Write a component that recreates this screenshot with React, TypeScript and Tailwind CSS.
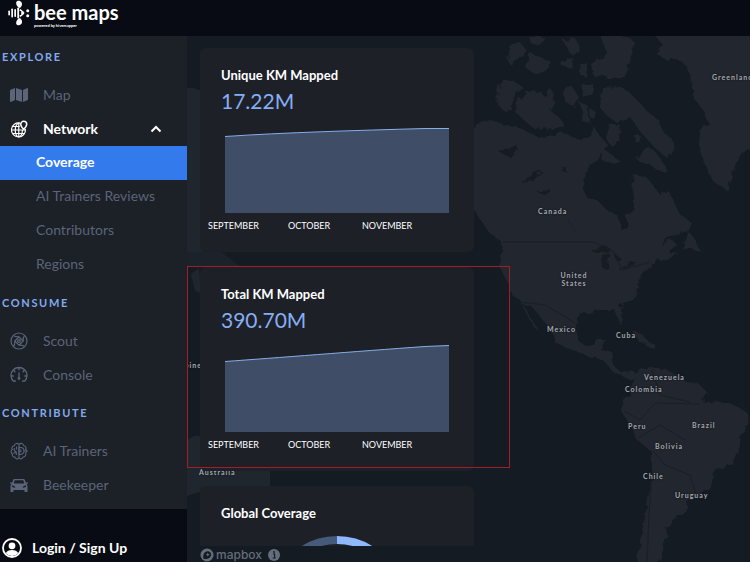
import type { ReactNode } from "react";
import { FaMap } from "react-icons/fa";

const iconClass = "h-[18px] w-[18px] shrink-0";

function GlobePinIcon() {
  return (
    <svg viewBox="0 0 18 18" className={iconClass} fill="none" stroke="currentColor" strokeWidth="1.2" aria-hidden="true">
      <path d="M10 3.1A7 7 0 1 0 15.4 9" />
      <path d="M9.6 3C7 3 5.200 6 5.200 10s1.800 7 3.600 7 3.600-3 3.600-6.500M8.800 3v14M1.800 10h13.600M2.800 6.500h7M2.800 13.500h12" />
      <path d="M13.700 9.500c-1.800-2-3-3.600-3-5.200a3 3 0 0 1 6 0c0 1.600-1.200 3.200-3 5.200z" strokeWidth="1.500" />
    </svg>
  );
}

function ScoutIcon() {
  return (
    <svg viewBox="0 0 18 18" className={iconClass} fill="none" stroke="currentColor" strokeWidth="1.2" aria-hidden="true">
      <circle cx="9" cy="9" r="8" />
      <path d="M9 4.800 13.200 9 9 13.200 4.800 9z" />
      <circle cx="9" cy="9" r="1.300" />
      <path d="M9 4.800C7 5 4.500 4.500 3.300 3.300M13.200 9c-.2-2 .3-4.500 1.500-5.700M9 13.200c2-.2 4.500.3 5.700 1.500M4.800 9c.2 2-.3 4.500-1.500 5.700" />
    </svg>
  );
}

function GaugeIcon() {
  return (
    <svg viewBox="0 0 18 18" className={iconClass} fill="none" stroke="currentColor" strokeWidth="1.3" strokeLinecap="round" aria-hidden="true">
      <path d="M5.500 15H3.200A8 8 0 1 1 14.800 15H12.500" />
      <path d="M9 7v4.500M9 2v1.800M3.800 4.500 5 5.700M14.200 4.500 13 5.700M1.500 10H3.200M16.500 10H14.800" />
      <circle cx="9" cy="12.500" r=".8" />
    </svg>
  );
}

function BrainIcon() {
  return (
    <svg viewBox="0 0 18 18" className={iconClass} fill="none" stroke="currentColor" strokeWidth="1.1" aria-hidden="true">
      <path d="M9 2.500C7.500.6 4.600 1.200 4.300 3.700 2 4 1.200 6.300 2.300 7.600.4 8.700.8 11.200 2.400 12c-.5 2 1 3.300 2.600 3.100.7 2.200 3.200 2.300 4 .6" />
      <path d="M9 2.500c1.500-1.900 4.400-1.300 4.700 1.200C16 4 16.500 6 15.600 7.400L17.200 9l-1.600 2c.7 1.900-.4 4-2.600 4.100-.7 2.200-3.200 2.300-4 .6z" />
      <path d="M9 5.500h1.500a3.500 3.500 0 0 1 0 7H9zM4.300 6v2.500l2 1.500v3M6.500 4.500v3M3.500 11.500l2-1.500M10.800 7.500v3M13.800 9h2.500" />
    </svg>
  );
}

function CarIcon() {
  return (
    <svg viewBox="0 0 18 18" className={iconClass} fill="currentColor" aria-hidden="true">
      <path
        fillRule="evenodd"
        d="M4.500 3h9c.7 0 1.200.4 1.400 1l.9 2.800 1.200-.6c.6-.2 1 .1 1 .6s-.3.9-.8 1l-.8.300c.7.500 1.100 1.200 1.100 2V15.500c0 .3-.2.500-.5.500h-2c-.3 0-.5-.2-.5-.5V14h-11v1.500c0 .3-.2.500-.5.500H1c-.3 0-.5-.2-.5-.5V10.100c0-.8.400-1.500 1.100-2L.8 7.800C.3 7.700 0 7.300 0 6.800s.4-.8 1-.6l1.200.6L3.100 4c.2-.6.700-1 1.400-1zm.2 1.300L3.800 7.500h10.400l-.9-3.200zM2 9.600v1.500l3 .6c.3 0 .4-.2.300-.5-.5-1-1.800-1.600-3.300-1.600zm14 0c-1.500 0-2.800.6-3.300 1.600-.1.300 0 .5.300.5l3-.6z"
      />
    </svg>
  );
}

function AvatarIcon() {
  return (
    <svg viewBox="0 0 20 20" className="h-5 w-5 shrink-0" aria-hidden="true">
      <circle cx="10" cy="10" r="9" fill="none" stroke="currentColor" strokeWidth="1.800" />
      <circle cx="10" cy="7.800" r="3.400" fill="currentColor" />
      <path d="M3.800 15.300c1-2.600 3.300-3.300 6.200-3.300s5.200.7 6.200 3.300A9 9 0 0 1 10 18a9 9 0 0 1-6.200-2.700z" fill="currentColor" />
    </svg>
  );
}

function BeeMark() {
  return (
    <svg viewBox="0 0 22 26" className="h-[26px] w-[22px] shrink-0" fill="currentColor" aria-hidden="true">
      <path d="M10.500 7.500C7.800 5 7.300 1.500 9.800.8c2.900-.7 5 2 4 4.600-.4 1-1 1.700-1.800 2.600zM10.500 18.500c-2.700 2.500-3.200 6-.7 6.700 2.900.7 5-2 4-4.600-.4-1-1-1.700-1.800-2.600z" />
      <rect x=".3" y="10.500" width="1.700" height="5" rx=".8" />
      <rect x="3.300" y="8.500" width="1.700" height="9" rx=".8" />
      <rect x="6.300" y="9" width="1.700" height="8" rx=".8" />
      <rect x="9.300" y="7.500" width="1.800" height="11" rx=".8" />
      <path d="M12 8.800l3.800 2.900c.7.600.7 2 0 2.600L12 17.200l-.4-2.200h1.600v-4h-1.600z" />
      <circle cx="19.700" cy="10.700" r="1.500" />
      <circle cx="19.700" cy="15.700" r="1.500" />
    </svg>
  );
}

function SectionHeading({ children }: { children: ReactNode }) {
  return (
    <h2 className="flex h-[42px] items-center pl-0.5 text-[11px] font-bold tracking-[0.15em] text-[#83a9ee]">{children}</h2>
  );
}

function NavItem({ icon, children }: { icon: ReactNode; children: ReactNode }) {
  return (
    <a href="#" className="flex h-[34px] items-center gap-[15px] pl-[10px] text-[14px] text-[#5b6478]">
      {icon}
      <span className="pb-0.5">{children}</span>
    </a>
  );
}

function SubItem({ active, children }: { active?: boolean; children: ReactNode }) {
  return (
    <a
      href="#"
      aria-current={active ? "page" : undefined}
      className={`flex h-[34px] items-center pb-1 pl-9 text-[14px] ${active ? "bg-[#337bec] font-bold text-white" : "text-[#5b6478]"}`}
    >
      {children}
    </a>
  );
}

function Sidebar() {
  return (
    <aside className="flex w-[187px] shrink-0 flex-col bg-[#1c2027]">
      <nav className="flex-1">
        <SectionHeading>EXPLORE</SectionHeading>
        <NavItem icon={<FaMap className={iconClass} aria-hidden="true" />}>Map</NavItem>
        <button type="button" aria-expanded="true" className="flex h-[34px] w-full items-center gap-[15px] pr-[25px] pl-[10px] text-[14px] font-bold text-white">
          <GlobePinIcon />
          <span className="flex-1 pb-0.5 text-left">Network</span>
          <svg viewBox="0 0 12 12" className="h-3 w-3" fill="none" stroke="currentColor" strokeWidth="2" aria-hidden="true">
            <path d="M1.500 8.500 6 4l4.500 4.500" />
          </svg>
        </button>
        <SubItem active>Coverage</SubItem>
        <SubItem>AI Trainers Reviews</SubItem>
        <SubItem>Contributors</SubItem>
        <SubItem>Regions</SubItem>
        <SectionHeading>CONSUME</SectionHeading>
        <NavItem icon={<ScoutIcon />}>Scout</NavItem>
        <NavItem icon={<GaugeIcon />}>Console</NavItem>
        <SectionHeading>CONTRIBUTE</SectionHeading>
        <NavItem icon={<BrainIcon />}>AI Trainers</NavItem>
        <NavItem icon={<CarIcon />}>Beekeeper</NavItem>
      </nav>
      <a href="#" className="flex h-[53px] items-end gap-[10px] bg-[#080b13] pb-1 pl-0.5 text-[14px] leading-5 font-bold text-white">
        <AvatarIcon />
        Login / Sign Up
      </a>
    </aside>
  );
}

function StatCard({ title, value, line }: { title: string; value: string; line: string }) {
  return (
    <section className="h-[204px] shrink-0 rounded-md bg-[#1d2027] pt-[17px]">
      <h3 className="pl-[21px] text-[13px] leading-5 font-bold text-white">{title}</h3>
      <p className="pt-1 pl-[21px] text-[21px] leading-6 text-[#86aef5]">{value}</p>
      <svg viewBox="0 0 224 100" className="mr-[25px] ml-[25px] block h-[100px] w-[224px]" role="img" aria-label={`${title}, September to November`}>
        <path d={`${line} V100 H0 Z`} fill="#3f4e66" />
        <path d={line} fill="none" stroke="#86aee8" strokeWidth="1" />
      </svg>
      <div className="flex gap-[31px] pt-1.5 pl-2 text-[9px] leading-[14px] text-white">
        <span className="w-[49px]">SEPTEMBER</span>
        <span className="w-[43px]">OCTOBER</span>
        <span>NOVEMBER</span>
      </div>
    </section>
  );
}

function GlobalCoverageCard() {
  return (
    <section className="h-[204px] shrink-0 rounded-md bg-[#1d2027] pt-[17px]">
      <h3 className="pl-[21px] text-[13px] leading-5 font-bold text-white">Global Coverage</h3>
      <svg viewBox="0 0 132 132" className="mx-auto mt-[13px] block h-[132px] w-[132px]" fill="none" strokeWidth="8" role="img" aria-label="Global coverage share">
        <path d="M66 128A62 62 0 0 1 66 4" stroke="#465a7c" />
        <path d="M66 4a62 62 0 0 1 0 124" stroke="#8fb7fb" />
      </svg>
    </section>
  );
}

const places = [
  { name: "Greenland", spot: "left-[525px] top-[37px]" },
  { name: "Canada", spot: "left-[351px] top-[171px]" },
  { name: "United States", spot: "left-[366px] top-[235px] w-[42px] text-center" },
  { name: "Mexico", spot: "left-[360px] top-[289px]" },
  { name: "Cuba", spot: "left-[429px] top-[295px]" },
  { name: "Venezuela", spot: "left-[457px] top-[337px]" },
  { name: "Colombia", spot: "left-[438px] top-[349px]" },
  { name: "Peru", spot: "left-[441px] top-[386px]" },
  { name: "Brazil", spot: "left-[505px] top-[385px]" },
  { name: "Bolivia", spot: "left-[468px] top-[406px]" },
  { name: "Chile", spot: "left-[456px] top-[436px]" },
  { name: "Uruguay", spot: "left-[488px] top-[455px]" },
  { name: "Philippines", spot: "-left-[26px] top-[325px]" },
  { name: "Australia", spot: "left-[12px] top-[432px]" },
];

function WorldMap() {
  return (
    <div className="absolute inset-0 overflow-hidden bg-[#151b22]">
      <svg viewBox="187 36 564 526" preserveAspectRatio="xMinYMin slice" className="h-full w-full" aria-hidden="true">
        <defs>
          <filter id="coast" x="0" y="0" width="1" height="1">
            <feTurbulence type="fractalNoise" baseFrequency="0.14" numOctaves="2" seed="4" />
            <feDisplacementMap in="SourceGraphic" scale="7" />
          </filter>
        </defs>
        <g fill="#20262f" filter="url(#coast)">
          <path d="M430 130 474 128 481 123 490 120 500 123 512 126 522 129 530 134 540 137 552 136 562 132 572 137 582 139 590 135 594 126 600 136 608 145 602 152 598 160 590 165 584 176 583 186 586 197 597 200 607 210 617 215 622 230 627 229 627 215 634 208 634 196 631 186 634 177 632 174 645 176 654 186 660 195 668 190 674 202 679 213 692 223 688 232 670 237 660 245 672 240 677 245 668 252 678 253 663 263 658 258 650 267 640 278 635 297 620 307 623 323 620 325 615 310 598 310 592 313 580 313 576 325 578 340 587 347 594 344 597 338 604 338 600 349 613 353 613 365 622 373 633 370 640 380 628 379 613 372 603 360 593 358 580 353 567 348 555 343 553 335 545 323 532 307 523 305 530 317 540 332 535 328 525 312 520 300 512 295 505 278 500 267 502 250 503 243 490 233 480 220 473 207 430 190z" />
          <path d="M688 232 692 235 698 244 700 251 692 249 682 248 686 240z" />
          <path d="M636 373 644 368 652 367 667 370 683 380 700 385 708 393 702 401 727 402 740 408 748 414 748 423 740 435 738 450 732 463 713 472 712 483 700 497 687 502 689 510 677 517 673 523 665 527 667 537 662 545 664 552 657 564 637 564 638 550 643 527 648 500 652 470 652 452 637 440 627 420 622 412 623 400 632 390z" />
          <path d="M650 30 662 44 656 54 666 60 680 60 688 68 692 85 695 100 703 110 708 122 700 132 699 145 705 165 712 180 722 187 727 190 731 178 737 160 742 153 760 146 760 30z" />
          <path d="M600 30 612 34 630 38 636 44 630 55 628 66 626 78 612 78 594 76 591 64 600 58 606 52z" />
          <path d="M512 44 520 42 526 50 519 60 510 64 506 59zM530 38 545 36 540 45 532 44zM530 53 540 57 551 62 543 72 535 75 525 67zM562 40 575 38 582 50 571 54zM560 61 574 59 572 69 562 66zM579 62 588 64 587 78 580 75z" />
          <path d="M500 81 514 81 523 87 515 98 505 112 497 104z" />
          <path d="M526 92 540 91 546 98 550 87 555 100 550 110 562 120 564 128 552 128 535 129 525 121 514 111 517 103z" />
          <path d="M563 90 572 86 578 97 575 107 566 103zM582 84 593 84 593 95 584 98zM580 103 587 104 590 122 583 123zM590 110 596 112 594 120 591 118z" />
          <path d="M602 87 618 86 629 92 640 103 648 112 660 121 663 132 673 140 675 149 667 158 655 148 646 138 638 129 630 117 616 122 606 115 600 107z" />
          <path d="M610 124 620 125 619 140 611 146 606 138zM634 135 640 135 641 143 635 142zM602 148 612 155 621 162 612 164 602 160zM635 157 651 147 662 160 668 173 658 171 649 164 640 162z" />
          <path d="M633 331 641 333 650 343 639 342zM646 342 656 345 654 348 645 346z" />
        </g>
        <g fill="#151b22" filter="url(#coast)">
          <path d="M499 152 515 144 518 150 511 158zM521 182 535 171 542 171 534 180zM537 192 552 190 545 195zM563 167 567 168 566 172 562 171zM567 217 572 227 579 237 573 228z" />
          <path d="M591 251 602 244 612 250 606 253zM602 257 609 253 608 269 603 268zM613 253 622 259 618 263zM616 271 636 260 634 265z" />
        </g>
        <g fill="none" stroke="#191f27" strokeWidth="1">
          <path d="M503 242H594L614 252 622 270 650 262M520 302 545 305 562 315 575 323M652 370 660 395 690 402M624 411 640 420 655 403 700 404M638 438 660 425 685 440M653 451 665 465 690 475 696 493M652 470 649 515 647 562" />
        </g>
        <g fill="#1f262e">
          <path d="M187 88H194L204 92V252H187z" />
          <path d="M187 252H221L240 266H187z" fill="#1b2229" />
          <path d="M191 274 199 268 201 293 195 291z" />
          <path d="M187 440 194 436 205 436V470H270V486L250 492H200L187 496z" />
        </g>
      </svg>
      {places.map((place) => (
        <span
          key={place.name}
          className={`absolute text-[7px] leading-2 font-bold tracking-[1px] text-[#a5a9ae] [text-shadow:0_0_2px_#10141a] ${place.spot}`}
        >
          {place.name}
        </span>
      ))}
    </div>
  );
}

export default function App() {
  return (
    <div className="flex min-h-screen flex-col overflow-hidden border-r border-white bg-[#080b13] font-['Lato',sans-serif]">
      <header className="flex h-9 items-start gap-[3px] pl-2 text-white">
        <BeeMark />
        <div className="pl-px">
          <p className="text-[20px] leading-6 font-bold">bee maps</p>
          <p className="text-[4px] leading-1 font-bold">powered by hivemapper</p>
        </div>
      </header>
      <div className="flex flex-1">
        <Sidebar />
        <main className="relative flex min-w-0 flex-1 flex-col">
          <WorldMap />
          <div className="relative ml-[13px] flex h-[510px] w-[274px] flex-col gap-[15px] overflow-hidden pt-3">
            <StatCard title="Unique KM Mapped" value="17.22M" line="M0 23.500C60 19.500 130 17.500 200 15.500L224 15.500" />
            <StatCard title="Total KM Mapped" value="390.70M" line="M0 29.500C50 26 130 19.500 200 14.500L224 13.500" />
            <GlobalCoverageCard />
          </div>
          <div className="relative ml-[13px] flex h-4 items-center gap-1.5 pt-0.5 text-[#646d7b]">
            <a href="#" className="flex items-center gap-0.5 text-[12px] leading-[14px] font-medium font-['Inter',sans-serif]">
              <svg viewBox="0 0 14 14" className="h-[14px] w-[14px]" aria-hidden="true">
                <circle cx="7" cy="7" r="6.500" fill="currentColor" />
                <path d="M3.500 10.700C2.600 7.500 4 3.200 7.700 3.200a3.500 3.500 0 0 1 2.500 6C8.500 11 5.500 11.200 3.500 10.700z" fill="#151b22" />
                <path d="M7.800 4.500 8.400 6l1.500.6-1.500.6-.6 1.500-.6-1.500-1.500-.6L7.200 6z" fill="currentColor" />
              </svg>
              mapbox
            </a>
            <button type="button" aria-label="Map attribution">
              <svg viewBox="0 0 12 12" className="h-3 w-3" aria-hidden="true">
                <circle cx="6" cy="6" r="6" fill="currentColor" />
                <path d="M5 5h1.600v4M4.700 9h3" stroke="#151b22" strokeWidth="1.200" fill="none" />
                <circle cx="6" cy="3" r=".9" fill="#151b22" />
              </svg>
            </button>
          </div>
          <div className="pointer-events-none absolute top-[230px] left-0 h-[202px] w-[323px] border border-[#a01f24]" />
        </main>
      </div>
    </div>
  );
}
